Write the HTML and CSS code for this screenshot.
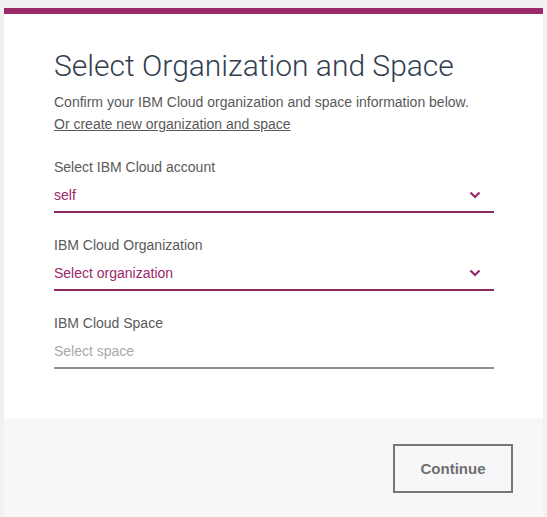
FILE: index.html
```html
<!DOCTYPE html>
<html>
<head>
<meta charset="utf-8">
<link rel="stylesheet" href="styles.css">
</head>
<body>
<div class="modal">
  <div class="modal-body">
    <h1 class="title">Select Organization and Space</h1>
    <p class="desc">Confirm your IBM Cloud organization and space information below.</p>
    <a class="link" href="#">Or create new organization and space</a>
    <div class="field">
      <div class="label">Select IBM Cloud account</div>
      <div class="select active">
        <span class="value">self</span>
        <svg class="chev" width="12" height="8" viewBox="0 0 12 8"><path d="M1.5 1.5 L6 6 L10.5 1.5" fill="none" stroke="#9b2869" stroke-width="2.2"/></svg>
      </div>
    </div>
    <div class="field">
      <div class="label">IBM Cloud Organization</div>
      <div class="select active">
        <span class="value">Select organization</span>
        <svg class="chev" width="12" height="8" viewBox="0 0 12 8"><path d="M1.5 1.5 L6 6 L10.5 1.5" fill="none" stroke="#9b2869" stroke-width="2.2"/></svg>
      </div>
    </div>
    <div class="field">
      <div class="label">IBM Cloud Space</div>
      <div class="select disabled">
        <span class="value">Select space</span>
      </div>
    </div>
  </div>
  <div class="modal-footer">
    <button class="btn">Continue</button>
  </div>
</div>
</body>
</html>
```
FILE: styles.css
```css
html, body {
  margin: 0;
  padding: 0;
  background: #f1f1f2;
  height: 100%;
}
body {
  font-family: "Liberation Sans", Arial, sans-serif;
  padding: 8px 4px 0 4px;
  box-sizing: border-box;
}
.modal {
  background: #ffffff;
  border-top: 6px solid #9b2869;
  height: 509px;
  box-sizing: border-box;
  display: flex;
  flex-direction: column;
}
.modal-body {
  padding: 35px 49px 0 50px;
  height: 404px;
  box-sizing: border-box;
}
.title {
  font-family: Roboto, sans-serif;
  font-weight: 300;
  font-size: 30px;
  color: #323e4f;
  margin: 0;
  line-height: 34px;
}
.desc {
  margin: 10px 0 0 0;
  font-size: 14px;
  line-height: 18px;
  color: #595959;
}
.link {
  display: inline-block;
  margin-top: 4px;
  font-size: 14px;
  line-height: 18px;
  color: #595959;
  text-decoration: underline;
}
.field {
  margin-top: 25px;
}
.field + .field {
  margin-top: 23px;
}
.label {
  font-size: 14px;
  line-height: 18px;
  color: #5a5a5a;
}
.select {
  display: flex;
  align-items: center;
  justify-content: space-between;
  height: 34px;
  margin-top: 3px;
  padding-right: 13px;
  box-sizing: border-box;
  font-size: 14px;
}
.select.active {
  border-bottom: 2px solid #8c2a64;
  color: #9b2869;
}
.select.disabled {
  border-bottom: 2px solid #8f8f8f;
  color: #a9a9a9;
}
.chev {
  display: block;
}
.modal-footer {
  flex: 1;
  background: #f7f7f9;
  display: flex;
  justify-content: flex-end;
  align-items: flex-start;
  padding: 26px 30px 0 0;
}
.btn {
  width: 120px;
  height: 49px;
  background: transparent;
  border: 2px solid #777777;
  font-family: "Liberation Sans", Arial, sans-serif;
  font-weight: bold;
  font-size: 15px;
  color: #6f6f6f;
}
```
